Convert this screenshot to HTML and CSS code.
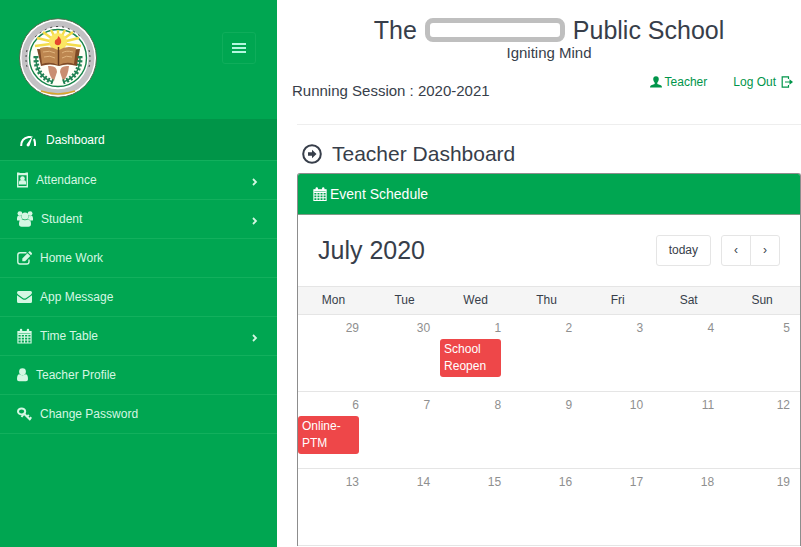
FILE: index.html
```html
<!DOCTYPE html>
<html lang="en">
<head>
  <meta charset="UTF-8">
  <meta name="viewport" content="width=device-width, initial-scale=1">
  <title>Teacher Dashboard</title>
  <link rel="stylesheet" href="styles.css">
</head>
<body>
  <svg class="sprite" aria-hidden="true">
    <symbol id="calendar" viewBox="0 0 16 16">
      <path fill="none" stroke="currentColor" stroke-width="1.2" d="M1 3.2h14v12.2H1zM1 6.2h14M1 9.2h14M1 12.3h14M4.5 6v9.4M8 6v9.4M11.5 6v9.4"/>
      <path fill="currentColor" d="M1 3h14v2.2H1z"/>
      <rect x="3" y=".3" width="2.6" height="4.2" rx="1.2" fill="currentColor"/>
      <rect x="10.4" y=".3" width="2.6" height="4.2" rx="1.2" fill="currentColor"/>
    </symbol>
    <symbol id="arrow" viewBox="0 0 6 8">
      <path fill="none" stroke="currentColor" stroke-width="1.8" d="M1 1l3 3-3 3"/>
    </symbol>
  </svg>

  <div class="page">
    <aside class="sidebar">
      <div class="sidebar-header">
        <a href="#" class="logo" aria-label="School home">
          <svg width="78" height="80" viewBox="0 0 78 80">
            <ellipse cx="39" cy="40" rx="38.5" ry="39.3" fill="#fff" stroke="#4c6b4c" stroke-width="1"/>
            <ellipse cx="39" cy="40" rx="33.5" ry="34.3" fill="none" stroke="#c3c1c4" stroke-width="6"/>
            <path d="M22 73q17 6 34 0" fill="none" stroke="#d9a52b" stroke-width="1.5"/>
            <path d="M16 19q23-21 46 0" fill="none" stroke="#333" stroke-width="1" stroke-dasharray="2 4"/>
            <path d="M8 32q-2 9 0 17M70 32q2 9 0 17" fill="none" stroke="#444" stroke-width="1" stroke-dasharray="2 3"/>
            <circle cx="39" cy="40" r="28.5" fill="#fffef6" stroke="#17834a" stroke-width="1.4"/>
            <path fill="none" stroke="#f4dc4a" stroke-width="2.4" d="M39 25L16 28M39 25L18 20M39 25L24 14M39 25L32 12M39 25V12M39 25L46 12M39 25L54 14M39 25L60 20M39 25L62 28"/>
            <circle cx="39" cy="24" r="9" fill="#fbe663"/>
            <path fill="#e5482d" d="M39 18q4 3 3 7-2 4-6 1-1-4 2-5 1 0 1-3z"/>
            <path fill="#7e4a26" d="M18 31l20 1h3l20-1-3 17q-10-3-18 0-9-3-18 0z"/>
            <path fill="#bd8650" d="M21 30q10-3 18 2v15q-8-4-16-1zM57 30q-10-3-17 2v15q8-4 15-1z"/>
            <path fill="none" stroke="#e0b47d" d="M24 34q7-2 12 1M25 39q6-2 11 1M54 34q-7-2-11 1M53 39q-6-2-10 1"/>
            <path stroke="#65381e" stroke-width="1.5" d="M39.500 29v18"/>
            <path fill="#c98e72" d="M29 48q9-1 9 6l-3 9q-5-4-6-15zM50 48q-9-1-9 6l3 9q5-4 6-15z"/>
            <path fill="none" stroke="#218355" stroke-width="5" stroke-dasharray="2 2" d="M17 38q-1 20 17 26M61 38q1 20-17 26"/>
            <path fill="none" stroke="#218355" stroke-width="1.5" d="M17 38q-1 20 17 26M61 38q1 20-17 26"/>
          </svg>
        </a>
        <button type="button" class="menu-toggle" aria-label="Toggle menu"><span></span><span></span><span></span></button>
      </div>

      <nav>
        <ul class="menu">
          <li>
            <a href="#" class="active">
              <svg width="16" height="16" viewBox="0 0 16 16"><path fill="none" stroke="currentColor" stroke-width="2" d="M1.200 13Q1 5.500 8.500 4q2-.3 3 .2M14 6q1.300 3 1 7"/><path fill="currentColor" d="M12.800 2.800L9.600 12.500q-1.200 1.800-2.700.6-.9-1.400.4-2.500z"/></svg>
              Dashboard
            </a>
          </li>
          <li>
            <a href="#">
              <svg width="11" height="16" viewBox="0 0 11 16"><path fill="none" stroke="currentColor" stroke-width="1.400" d="M.7 1.700h9.600v13.100H.7z"/><path fill="currentColor" d="M0 .5h2.500V2h6V.5H11v2.700H0zM2 12.500V10q0-1.700 1.800-1.700h3.400Q9 8.300 9 10v2.500z"/><circle cx="5.500" cy="6.500" r="2.300" fill="currentColor"/></svg>
              Attendance
              <svg class="arrow" width="6" height="8"><use href="#arrow"/></svg>
            </a>
          </li>
          <li>
            <a href="#">
              <svg width="16" height="16" viewBox="0 0 16 16"><g fill="currentColor"><circle cx="2.900" cy="2.600" r="2.400"/><circle cx="13.100" cy="2.600" r="2.400"/><circle cx="8" cy="5" r="3.500"/><path d="M0 9V7q.3-2.200 1.500-2.200 1.500.8 2.800 0 0 2.500 1.300 3.600Q4 8.300 3.200 9.500H1Q0 9.500 0 9zM16 9V7q-.3-2.200-1.500-2.200-1.500.8-2.800 0 0 2.500-1.300 3.600 1.600-.1 2.400 1.100H15q1 0 1-.5zM2 13q0-4.500 2.800-4.800 3.200 2.200 6.400 0Q14 8.500 14 13q0 2.700-2.600 2.700H4.600Q2 15.700 2 13z"/></g></svg>
              Student
              <svg class="arrow" width="6" height="8"><use href="#arrow"/></svg>
            </a>
          </li>
          <li>
            <a href="#">
              <svg width="15" height="16" viewBox="0 0 15 16"><path fill="none" stroke="currentColor" stroke-width="1.400" d="M9.500 2.700H3Q.8 2.700.8 4.900v6.900Q.8 14 3 14h6.800q2.200 0 2.200-2.200V9.500"/><path fill="currentColor" d="M5.300 11.200V8.400l5.200-5.200 2.800 2.800-5.200 5.200zM11.200 2.500l.9-.9q.7-.5 1.300 0l1.400 1.500q.5.600 0 1.200l-.8.900z"/></svg>
              Home Work
            </a>
          </li>
          <li>
            <a href="#">
              <svg width="15" height="16" viewBox="0 0 15 16"><path fill="currentColor" d="M0 3.800Q0 2 1.500 2h12Q15 2 15 3.500q0 1.300-1.500 2.400L8.800 9.200q-1.300.8-2.600 0L1.400 5.800Q0 4.800 0 3.800zM0 6.200l5.600 4q1.900 1.200 3.800 0l5.600-4v6.300q0 1.500-1.500 1.500h-12Q0 14 0 12.500z"/></svg>
              App Message
            </a>
          </li>
          <li>
            <a href="#">
              <svg width="15" height="16"><use href="#calendar"/></svg>
              Time Table
              <svg class="arrow" width="6" height="8"><use href="#arrow"/></svg>
            </a>
          </li>
          <li>
            <a href="#">
              <svg width="11" height="16" viewBox="0 0 11 16"><circle cx="5.500" cy="4.700" r="3.400" fill="currentColor"/><path fill="currentColor" d="M0 12.200q0-4.900 2.400-5 3.100 2.200 6.200 0 2.400.1 2.400 5Q11 14.300 9 14.300H2Q0 14.300 0 12.200z"/></svg>
              Teacher Profile
            </a>
          </li>
          <li>
            <a href="#">
              <svg width="15" height="16" viewBox="0 0 15 16"><ellipse cx="4.600" cy="5.400" rx="3.600" ry="3" fill="none" stroke="currentColor" stroke-width="2"/><path fill="none" stroke="currentColor" stroke-width="2" d="M4.500 11L8 6.500M6.800 7.500l6.700 6.500M9.800 11l2-2.200M12.400 13.300l2-2"/></svg>
              Change Password
            </a>
          </li>
        </ul>
      </nav>
    </aside>

    <main class="content">
      <header class="school-header">
        <h1>The <span class="school-name"></span> Public School</h1>
        <p class="tagline">Igniting Mind</p>
        <div class="session-bar">
          <span class="session">Running Session : 2020-2021</span>
          <div class="user-links">
            <a href="#">
              <svg width="12" height="12" viewBox="0 0 12 12"><path fill="currentColor" d="M6 .2q2.800 0 2.800 3Q8.600 5.700 7.300 6.800v1.200l3.500 1.300Q12 9.800 12 11.500H0Q0 9.800 1.200 9.300L4.700 8V6.800Q3.400 5.700 3.200 3.200q0-3 2.800-3z"/></svg>
              Teacher
            </a>
            <a href="#">
              Log Out
              <svg width="12" height="12" viewBox="0 0 12 12"><path fill="none" stroke="currentColor" stroke-width="1.200" d="M7.500 3V.8H1.200v10.400h6.300V9M4 6h6"/><path fill="currentColor" d="M8.500 3.300L12 6 8.500 8.700z"/></svg>
            </a>
          </div>
        </div>
      </header>

      <h2 class="page-title">
        <svg width="20" height="20" viewBox="0 0 20 20"><circle cx="10" cy="10" r="8.800" fill="none" stroke="currentColor" stroke-width="2"/><path fill="currentColor" d="M6 8.300h4V5.800l4.500 4.200-4.500 4.200v-2.500H6z"/></svg>
        Teacher Dashboard
      </h2>

      <section class="panel">
        <div class="panel-heading">
          <svg width="14" height="14"><use href="#calendar"/></svg>
          Event Schedule
        </div>

        <div class="calendar-toolbar">
          <h3>July 2020</h3>
          <button type="button" class="btn">today</button>
          <div class="btn-group">
            <button type="button" class="btn" aria-label="Previous month">‹</button>
            <button type="button" class="btn" aria-label="Next month">›</button>
          </div>
        </div>

        <table class="calendar">
          <thead>
            <tr>
              <th>Mon</th>
              <th>Tue</th>
              <th>Wed</th>
              <th>Thu</th>
              <th>Fri</th>
              <th>Sat</th>
              <th>Sun</th>
            </tr>
          </thead>
          <tbody>
            <tr>
              <td>29</td>
              <td>30</td>
              <td>1<a href="#" class="event">School Reopen</a></td>
              <td>2</td>
              <td>3</td>
              <td>4</td>
              <td>5</td>
            </tr>
            <tr>
              <td>6<a href="#" class="event">Online-PTM</a></td>
              <td>7</td>
              <td>8</td>
              <td>9</td>
              <td>10</td>
              <td>11</td>
              <td>12</td>
            </tr>
            <tr>
              <td>13</td>
              <td>14</td>
              <td>15</td>
              <td>16</td>
              <td>17</td>
              <td>18</td>
              <td>19</td>
            </tr>
          </tbody>
        </table>
      </section>
    </main>
  </div>
</body>
</html>
```
FILE: styles.css
```css
:root {
  --green: #00a651;
  --green-dark: #009548;
  --text: #373e4a;
  --border: #e5e5e5;
  --event: #ee4749;
}

* {
  box-sizing: border-box;
}

body {
  margin: 0;
  font-family: "Liberation Sans", Arial, sans-serif;
  font-size: 12px;
  line-height: 17px;
  color: var(--text);
  background: #fff;
}

a {
  color: inherit;
  text-decoration: none;
}

h1, h2, h3, p {
  margin: 0;
  font-weight: normal;
}

.sprite {
  display: none;
}

.page {
  display: flex;
  min-height: 100vh;
}

/* sidebar */
.sidebar {
  flex: 0 0 277px;
  background: var(--green);
  color: #d5f7e3;
}

.sidebar-header {
  display: flex;
  justify-content: space-between;
  align-items: flex-start;
  padding: 18px 21px 21px 19px;
}

.logo svg {
  display: block;
}

.menu-toggle {
  display: flex;
  flex-direction: column;
  justify-content: center;
  align-items: center;
  gap: 2px;
  width: 34px;
  height: 32px;
  margin-top: 14px;
  padding: 0;
  background: none;
  border: 1px solid #0fad5b;
  border-radius: 3px;
}

.menu-toggle span {
  width: 14px;
  height: 2px;
  background: #b5f7e0;
}

.menu {
  margin: 0;
  padding: 0;
  list-style: none;
}

.menu li {
  border-bottom: 1px solid #12b05d;
}

.menu a {
  display: flex;
  align-items: center;
  gap: 8px;
  height: 38px;
  padding: 0 19px 0 17px;
}

.menu a.active {
  gap: 10px;
  height: 41px;
  padding-left: 20px;
  padding-top: 2px;
  background: var(--green-dark);
  color: #fff;
}

.menu .arrow {
  margin-left: auto;
  margin-top: 3px;
}

/* content */
.content {
  flex: 1;
  padding: 15px 0 0 20px;
}

.school-header {
  border-bottom: 1px solid #eee;
  padding-bottom: 23px;
}

.school-header h1 {
  display: flex;
  justify-content: center;
  align-items: center;
  gap: 8px;
  font-size: 25px;
  line-height: 30px;
}

.school-name {
  width: 140px;
  height: 24px;
  border: 5px solid #bfbfbf;
  border-radius: 8px;
}

.tagline {
  font-size: 15px;
  line-height: 15px;
  text-align: center;
}

.session-bar {
  display: flex;
  justify-content: space-between;
  margin: 12px 8px 0 -5px;
}

.session {
  padding-top: 9px;
  font-size: 15px;
  line-height: 20px;
}

.user-links {
  display: flex;
  gap: 26px;
  color: #00954a;
}

.user-links a {
  display: flex;
  align-items: center;
  gap: 3px;
  height: 20px;
}

.user-links a:last-child {
  gap: 5px;
}

.page-title {
  display: flex;
  align-items: center;
  gap: 10px;
  padding: 16px 0 7px 5px;
  font-size: 21px;
  line-height: 25px;
}

/* calendar panel */
.panel {
  border: 1px solid #8d8d8d;
  border-bottom: 0;
  border-radius: 3px 3px 0 0;
  overflow: hidden;
}

.panel-heading {
  display: flex;
  align-items: center;
  gap: 3px;
  height: 41px;
  padding: 0 15px;
  background: var(--green);
  border-bottom: 1px solid #7f9a86;
  color: #fff;
  font-size: 14px;
}

.calendar-toolbar {
  display: flex;
  align-items: center;
  padding: 20px;
}

.calendar-toolbar h3 {
  margin-right: auto;
  font-size: 25px;
  line-height: 31px;
}

.btn {
  height: 31px;
  padding: 0 12px 1px;
  background: #fff;
  border: 1px solid var(--border);
  border-radius: 3px;
  font: inherit;
  color: var(--text);
}

.btn-group {
  display: flex;
  margin-left: 10px;
}

.btn-group .btn {
  width: 30px;
  padding: 0;
}

.btn-group .btn:first-child {
  border-radius: 3px 0 0 3px;
}

.btn-group .btn:last-child {
  margin-left: -1px;
  border-radius: 0 3px 3px 0;
}

.calendar {
  width: 100%;
  table-layout: fixed;
  border-collapse: collapse;
}

.calendar th {
  height: 28px;
  padding: 0 0 1px;
  background: #f5f5f5;
  border-top: 1px solid var(--border);
  font-weight: normal;
}

.calendar th:not(:last-child) {
  width: 14.15%;
}

.calendar td {
  height: 77px;
  padding: 5px 10px 0 0;
  border-top: 1px solid var(--border);
  color: #8f8f8f;
  text-align: right;
  vertical-align: top;
}

.calendar tbody tr:last-child td {
  border-bottom: 1px solid var(--border);
}

.event {
  display: block;
  margin-top: 2px;
  padding: 2px 4px;
  background: var(--event);
  border-radius: 3px;
  color: #fff;
  text-align: left;
}
```
